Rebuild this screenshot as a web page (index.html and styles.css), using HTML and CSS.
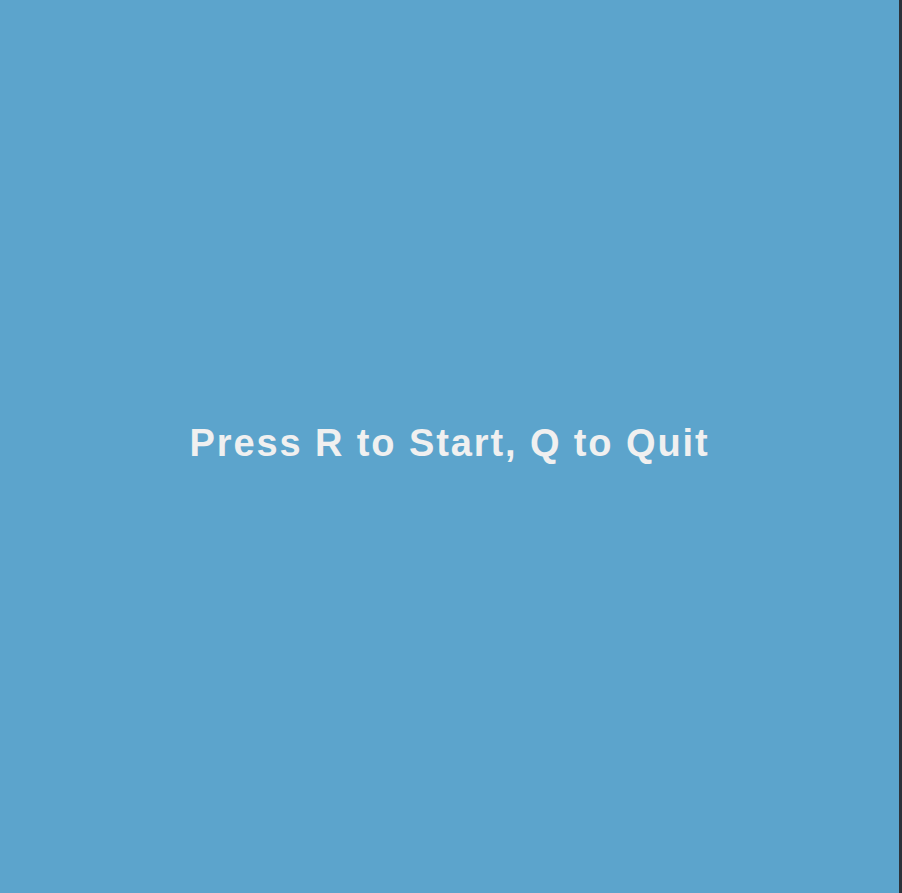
FILE: index.html
```html
<!DOCTYPE html>
<html>
<head>
<meta charset="utf-8">
<link rel="stylesheet" href="styles.css">
</head>
<body>
<div class="screen">
  <main class="stage">
    <p class="prompt">Press R to Start, Q to Quit</p>
  </main>
  <div class="edge"></div>
</div>
</body>
</html>
```
FILE: styles.css
```css
html, body {
  margin: 0;
  padding: 0;
  height: 100%;
  overflow: hidden;
}
.screen {
  display: flex;
  width: 902px;
  height: 893px;
}
.stage {
  flex: 1;
  background: #5ca4cc;
  display: flex;
  align-items: center;
  justify-content: center;
}
.prompt {
  margin: 0 0 6px 0;
  font-family: "Liberation Sans", Arial, sans-serif;
  font-weight: bold;
  font-size: 38px;
  color: #f0f0f0;
  letter-spacing: 1.9px;
}
.edge {
  width: 3px;
  background: #2b323a;
}
```
